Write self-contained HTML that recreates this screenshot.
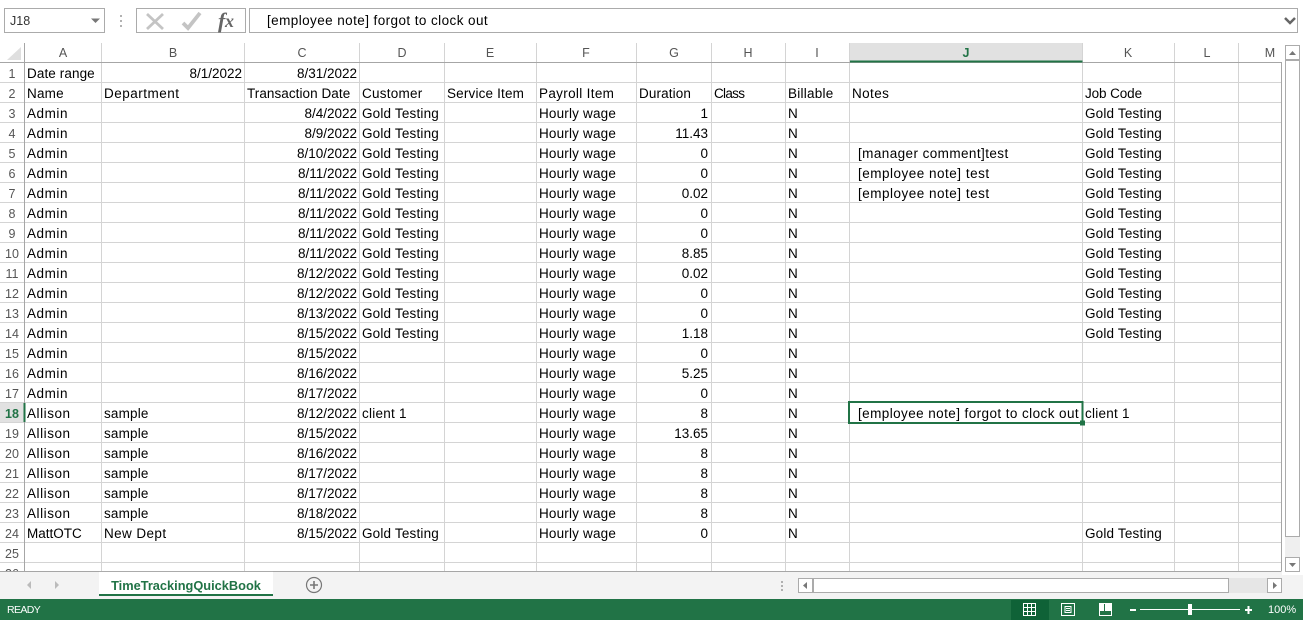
<!DOCTYPE html>
<html><head><meta charset="utf-8"><style>
html,body{margin:0;padding:0;width:1303px;height:620px;overflow:hidden;background:#fff}
svg{display:block}
text{font-family:"Liberation Sans",sans-serif;font-size:13.5px;fill:#000}
.h{fill:#555;font-size:12.5px;text-anchor:middle}
.r{text-anchor:end}
.g{stroke:#d4d4d4;stroke-width:1;shape-rendering:crispEdges}
.b{stroke:#ababab;stroke-width:1;fill:#fff;shape-rendering:crispEdges}
.w{fill:#fff;font-size:11px}
text[x="27"]{letter-spacing:.55px}
text[x="104"]{letter-spacing:.17px}
text[x="362"]{letter-spacing:.18px}
text[x="539"]{letter-spacing:.18px}
text[x="1085"]{letter-spacing:.18px}
text[x="858"]{letter-spacing:.42px}
text[x="267"]{letter-spacing:.42px}
</style></head><body>
<svg width="1303" height="620" viewBox="0 0 1303 620" xmlns="http://www.w3.org/2000/svg">
<rect width="1303" height="620" fill="#fff"/>
<!-- formula bar -->
<rect class="b" x="4.500" y="8.500" width="100" height="24"/>
<text x="10" y="25" style="font-size:12.5px;fill:#333">J18</text>
<path d="M91 18.500h9l-4.500 4.500z" fill="#777"/>
<path d="M121 15v2M121 20v2M121 25v2" stroke="#999" stroke-width="1.500"/>
<rect class="b" x="136.500" y="8.500" width="109" height="24"/>
<path d="M147 14l16 15M163 14l-16 15" stroke="#c4c4c4" stroke-width="2.800" fill="none"/>
<path d="M183 23l5 5 12-15" stroke="#c4c4c4" stroke-width="3.800" fill="none"/>
<text x="218" y="28" style="font-family:'Liberation Serif',serif;font-style:italic;font-weight:bold;font-size:22px;fill:#666">f</text>
<text x="225" y="27" style="font-family:'Liberation Serif',serif;font-style:italic;font-weight:bold;font-size:18px;fill:#666">x</text>
<rect class="b" x="249.500" y="8.500" width="1048" height="24"/>
<text x="267" y="25">[employee note] forgot to clock out</text>
<path d="M1285 18l5 5 5-5" stroke="#666" stroke-width="2.500" fill="none"/>
<!-- column headers -->
<rect x="850" y="43" width="232" height="18" fill="#e1e1e1"/>
<path d="M21 47v13h-14z" fill="#dfdfdf"/>
<path class="g" d="M101.500 43v19M244.500 43v19M359.500 43v19M444.500 43v19M536.500 43v19M636.500 43v19M711.500 43v19M785.500 43v19M849.500 43v19M1082.500 43v19M1174.500 43v19M1238.500 43v19"/>
<!-- row highlight -->
<rect x="0" y="403" width="24" height="19" fill="#e1e1e1"/>
<!-- grid -->
<path class="g" d="M0 82.500H1281M0 102.500H1281M0 122.500H1281M0 142.500H1281M0 162.500H1281M0 182.500H1281M0 202.500H1281M0 222.500H1281M0 242.500H1281M0 262.500H1281M0 282.500H1281M0 302.500H1281M0 322.500H1281M0 342.500H1281M0 362.500H1281M0 382.500H1281M0 402.500H1281M0 422.500H1281M0 442.500H1281M0 462.500H1281M0 482.500H1281M0 502.500H1281M0 522.500H1281M0 542.500H1281M0 562.500H1281"/>
<path class="g" d="M101.500 62V571M244.500 62V571M359.500 62V571M444.500 62V571M536.500 62V571M636.500 62V571M711.500 62V571M785.500 62V571M849.500 62V571M1082.500 62V571M1174.500 62V571M1238.500 62V571"/>
<path d="M0 62.500H1281.500V571M24.500 43V571" stroke="#a6a6a6" fill="none" shape-rendering="crispEdges"/>
<rect x="850" y="60.500" width="232.500" height="2" fill="#217346"/>
<rect x="23.500" y="403" width="2" height="19" fill="#217346"/>
<text class="h" x="63" y="57">A</text><text class="h" x="173" y="57">B</text><text class="h" x="302" y="57">C</text><text class="h" x="402" y="57">D</text><text class="h" x="490" y="57">E</text><text class="h" x="586" y="57">F</text><text class="h" x="674" y="57">G</text><text class="h" x="748" y="57">H</text><text class="h" x="817" y="57">I</text><text class="h" x="966" y="57" style="font-weight:bold;fill:#217346">J</text><text class="h" x="1128" y="57">K</text><text class="h" x="1207" y="57">L</text><text class="h" x="1270" y="57">M</text>
<!-- row numbers -->
<text class="h" x="12" y="78">1</text><text class="h" x="12" y="98">2</text><text class="h" x="12" y="118">3</text><text class="h" x="12" y="138">4</text><text class="h" x="12" y="158">5</text><text class="h" x="12" y="178">6</text><text class="h" x="12" y="198">7</text><text class="h" x="12" y="218">8</text><text class="h" x="12" y="238">9</text><text class="h" x="12" y="258">10</text><text class="h" x="12" y="278">11</text><text class="h" x="12" y="298">12</text><text class="h" x="12" y="318">13</text><text class="h" x="12" y="338">14</text><text class="h" x="12" y="358">15</text><text class="h" x="12" y="378">16</text><text class="h" x="12" y="398">17</text><text class="h" x="12" y="418" style="font-weight:bold;fill:#217346">18</text><text class="h" x="12" y="438">19</text><text class="h" x="12" y="458">20</text><text class="h" x="12" y="478">21</text><text class="h" x="12" y="498">22</text><text class="h" x="12" y="518">23</text><text class="h" x="12" y="538">24</text><text class="h" x="12" y="558">25</text><text class="h" x="12" y="578">26</text>
<!-- rows -->
<text x="27" y="78" style="letter-spacing:.1px">Date range</text><text class="r" x="242" y="78">8/1/2022</text><text class="r" x="357" y="78">8/31/2022</text>
<text x="27" y="98" style="letter-spacing:.2px">Name</text><text x="104" y="98" style="letter-spacing:.5px">Department</text><text x="247" y="98" style="letter-spacing:.06px">Transaction Date</text><text x="362" y="98" style="letter-spacing:.25px">Customer</text><text x="447" y="98" style="letter-spacing:.17px">Service Item</text><text x="539" y="98" style="letter-spacing:.33px">Payroll Item</text><text x="639" y="98" style="letter-spacing:.12px">Duration</text><text x="714" y="98" style="letter-spacing:-.7px">Class</text><text x="788" y="98" style="letter-spacing:.25px">Billable</text><text x="852" y="98" style="letter-spacing:.4px">Notes</text><text x="1085" y="98" style="letter-spacing:-.1px">Job Code</text>
<text x="27" y="118">Admin</text><text class="r" x="357" y="118">8/4/2022</text><text x="362" y="118">Gold Testing</text><text x="539" y="118">Hourly wage</text><text class="r" x="708" y="118">1</text><text x="788" y="118">N</text><text x="1085" y="118">Gold Testing</text>
<text x="27" y="138">Admin</text><text class="r" x="357" y="138">8/9/2022</text><text x="362" y="138">Gold Testing</text><text x="539" y="138">Hourly wage</text><text class="r" x="708" y="138">11.43</text><text x="788" y="138">N</text><text x="1085" y="138">Gold Testing</text>
<text x="27" y="158">Admin</text><text class="r" x="357" y="158">8/10/2022</text><text x="362" y="158">Gold Testing</text><text x="539" y="158">Hourly wage</text><text class="r" x="708" y="158">0</text><text x="788" y="158">N</text><text x="858" y="158">[manager comment]test</text><text x="1085" y="158">Gold Testing</text>
<text x="27" y="178">Admin</text><text class="r" x="357" y="178">8/11/2022</text><text x="362" y="178">Gold Testing</text><text x="539" y="178">Hourly wage</text><text class="r" x="708" y="178">0</text><text x="788" y="178">N</text><text x="858" y="178" style="letter-spacing:.5px">[employee note] test</text><text x="1085" y="178">Gold Testing</text>
<text x="27" y="198">Admin</text><text class="r" x="357" y="198">8/11/2022</text><text x="362" y="198">Gold Testing</text><text x="539" y="198">Hourly wage</text><text class="r" x="708" y="198">0.02</text><text x="788" y="198">N</text><text x="858" y="198" style="letter-spacing:.5px">[employee note] test</text><text x="1085" y="198">Gold Testing</text>
<text x="27" y="218">Admin</text><text class="r" x="357" y="218">8/11/2022</text><text x="362" y="218">Gold Testing</text><text x="539" y="218">Hourly wage</text><text class="r" x="708" y="218">0</text><text x="788" y="218">N</text><text x="1085" y="218">Gold Testing</text>
<text x="27" y="238">Admin</text><text class="r" x="357" y="238">8/11/2022</text><text x="362" y="238">Gold Testing</text><text x="539" y="238">Hourly wage</text><text class="r" x="708" y="238">0</text><text x="788" y="238">N</text><text x="1085" y="238">Gold Testing</text>
<text x="27" y="258">Admin</text><text class="r" x="357" y="258">8/11/2022</text><text x="362" y="258">Gold Testing</text><text x="539" y="258">Hourly wage</text><text class="r" x="708" y="258">8.85</text><text x="788" y="258">N</text><text x="1085" y="258">Gold Testing</text>
<text x="27" y="278">Admin</text><text class="r" x="357" y="278">8/12/2022</text><text x="362" y="278">Gold Testing</text><text x="539" y="278">Hourly wage</text><text class="r" x="708" y="278">0.02</text><text x="788" y="278">N</text><text x="1085" y="278">Gold Testing</text>
<text x="27" y="298">Admin</text><text class="r" x="357" y="298">8/12/2022</text><text x="362" y="298">Gold Testing</text><text x="539" y="298">Hourly wage</text><text class="r" x="708" y="298">0</text><text x="788" y="298">N</text><text x="1085" y="298">Gold Testing</text>
<text x="27" y="318">Admin</text><text class="r" x="357" y="318">8/13/2022</text><text x="362" y="318">Gold Testing</text><text x="539" y="318">Hourly wage</text><text class="r" x="708" y="318">0</text><text x="788" y="318">N</text><text x="1085" y="318">Gold Testing</text>
<text x="27" y="338">Admin</text><text class="r" x="357" y="338">8/15/2022</text><text x="362" y="338">Gold Testing</text><text x="539" y="338">Hourly wage</text><text class="r" x="708" y="338">1.18</text><text x="788" y="338">N</text><text x="1085" y="338">Gold Testing</text>
<text x="27" y="358">Admin</text><text class="r" x="357" y="358">8/15/2022</text><text x="539" y="358">Hourly wage</text><text class="r" x="708" y="358">0</text><text x="788" y="358">N</text>
<text x="27" y="378">Admin</text><text class="r" x="357" y="378">8/16/2022</text><text x="539" y="378">Hourly wage</text><text class="r" x="708" y="378">5.25</text><text x="788" y="378">N</text>
<text x="27" y="398">Admin</text><text class="r" x="357" y="398">8/17/2022</text><text x="539" y="398">Hourly wage</text><text class="r" x="708" y="398">0</text><text x="788" y="398">N</text>
<text x="27" y="418">Allison</text><text x="104" y="418">sample</text><text class="r" x="357" y="418">8/12/2022</text><text x="362" y="418" style="letter-spacing:.25px">client 1</text><text x="539" y="418">Hourly wage</text><text class="r" x="708" y="418">8</text><text x="788" y="418">N</text><text x="858" y="418">[employee note] forgot to clock out</text><text x="1085" y="418" style="letter-spacing:.25px">client 1</text>
<text x="27" y="438">Allison</text><text x="104" y="438">sample</text><text class="r" x="357" y="438">8/15/2022</text><text x="539" y="438">Hourly wage</text><text class="r" x="708" y="438">13.65</text><text x="788" y="438">N</text>
<text x="27" y="458">Allison</text><text x="104" y="458">sample</text><text class="r" x="357" y="458">8/16/2022</text><text x="539" y="458">Hourly wage</text><text class="r" x="708" y="458">8</text><text x="788" y="458">N</text>
<text x="27" y="478">Allison</text><text x="104" y="478">sample</text><text class="r" x="357" y="478">8/17/2022</text><text x="539" y="478">Hourly wage</text><text class="r" x="708" y="478">8</text><text x="788" y="478">N</text>
<text x="27" y="498">Allison</text><text x="104" y="498">sample</text><text class="r" x="357" y="498">8/17/2022</text><text x="539" y="498">Hourly wage</text><text class="r" x="708" y="498">8</text><text x="788" y="498">N</text>
<text x="27" y="518">Allison</text><text x="104" y="518">sample</text><text class="r" x="357" y="518">8/18/2022</text><text x="539" y="518">Hourly wage</text><text class="r" x="708" y="518">8</text><text x="788" y="518">N</text>
<text x="27" y="538" style="letter-spacing:0">MattOTC</text><text x="104" y="538" style="letter-spacing:.4px">New Dept</text><text class="r" x="357" y="538">8/15/2022</text><text x="362" y="538">Gold Testing</text><text x="539" y="538">Hourly wage</text><text class="r" x="708" y="538">0</text><text x="788" y="538">N</text><text x="1085" y="538">Gold Testing</text>
<!-- selection -->
<rect x="849" y="402" width="233.500" height="21" fill="none" stroke="#217346" stroke-width="2" shape-rendering="crispEdges"/>
<rect x="1080" y="420.500" width="5" height="5" fill="#217346"/>
<!-- vertical scrollbar -->
<rect x="1282" y="43" width="21" height="532" fill="#fff"/>
<rect x="1285" y="45" width="15" height="527" fill="#efefef"/>
<rect class="b" x="1285.500" y="45.500" width="14" height="14"/>
<path d="M1289 55h7l-3.500-4z" fill="#777"/>
<rect class="b" x="1285.500" y="60.500" width="14" height="476"/>
<rect class="b" x="1285.500" y="557.500" width="14" height="14"/>
<path d="M1289 563h7l-3.500 4z" fill="#777"/>
<!-- bottom bar -->
<rect x="0" y="572" width="1282" height="27" fill="#f3f3f3"/>
<rect x="1282" y="575" width="21" height="24" fill="#f3f3f3"/>
<path d="M0 571.500H1281.500" stroke="#a6a6a6" shape-rendering="crispEdges"/>
<path d="M31 581v8l-4-4zM55 581v8l4-4z" fill="#bbb"/>
<path d="M99.500 596V571.500H272.500V596" fill="#fff" stroke="#ababab" shape-rendering="crispEdges"/>
<rect x="99" y="572" width="174" height="22" fill="#fff"/>
<rect x="99" y="594" width="174" height="2" fill="#217346"/>
<text x="186" y="590" text-anchor="middle" style="font-weight:bold;font-size:12.8px;fill:#217346">TimeTrackingQuickBook</text>
<circle cx="314" cy="585" r="7.500" fill="none" stroke="#777" stroke-width="1.200"/>
<path d="M310 585h8M314 581v8" stroke="#777" stroke-width="1.600"/>
<path d="M782 581v2M782 585v2M782 589v2" stroke="#999" stroke-width="1.500"/>
<rect x="798" y="578" width="484" height="15" fill="#e6e6e6"/>
<rect class="b" x="798.500" y="578.500" width="14" height="14"/>
<path d="M807 582v7l-4-3.500z" fill="#777"/>
<rect class="b" x="813.500" y="578.500" width="415" height="14"/>
<rect class="b" x="1267.500" y="578.500" width="14" height="14"/>
<path d="M1273 582v7l4-3.500z" fill="#777"/>
<!-- status bar -->
<rect x="0" y="599" width="1303" height="21" fill="#217346"/>
<text class="w" x="7" y="613" style="font-size:10.500px;letter-spacing:-.6px">READY</text>
<rect x="1011" y="600" width="38" height="20" fill="#0f6237"/>
<path d="M1023.500 603.500h12v12h-12zM1027.500 603.500v12M1031.500 603.500v12M1023.500 607.500h12M1023.500 611.500h12" stroke="#fff" fill="none" shape-rendering="crispEdges"/>
<path d="M1061.500 603.500h13v12h-13zM1065 606.500h6v6h-6zM1066 608.500h4M1066 610.500h4" stroke="#fff" fill="none" shape-rendering="crispEdges"/>
<path d="M1099.500 603.500h12v12h-12z" stroke="#fff" fill="none" shape-rendering="crispEdges"/>
<path d="M1099 603h5v8h-5zM1105 603h6v8h-6z" fill="#fff"/>
<rect x="1130" y="609" width="6" height="2" fill="#fff"/>
<rect x="1140" y="609" width="100" height="1" fill="#fff"/>
<rect x="1188" y="604" width="4" height="11" fill="#fff"/>
<path d="M1245 610h7M1248.500 606v8" stroke="#fff" stroke-width="2"/>
<text class="w" x="1268" y="613">100%</text>
</svg>
</body></html>
